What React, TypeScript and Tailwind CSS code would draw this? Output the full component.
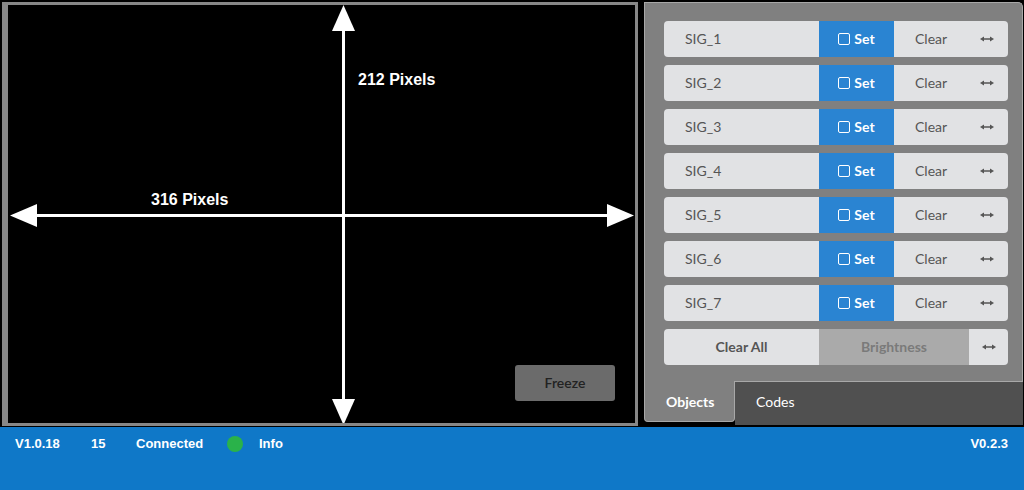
const signals = ['SIG_1', 'SIG_2', 'SIG_3', 'SIG_4', 'SIG_5', 'SIG_6', 'SIG_7'];

function SideArrow() {
  return (
    <svg width="14" height="8" viewBox="0 0 14 8" className="block">
      <line x1="3" y1="4" x2="11" y2="4" stroke="#555" strokeWidth="1.4" />
      <polygon points="0,4 4,1.5 4,6.5" fill="#555" />
      <polygon points="14,4 10,1.5 10,6.5" fill="#555" />
    </svg>
  );
}

function SigRow({ name }: { name: string }) {
  return (
    <div className="flex h-[36px] rounded-[4px] overflow-hidden bg-[#e1e2e4] text-[14px] leading-[34px]">
      <div className="w-[155px] flex items-center pl-[21px] text-[#555]">{name}</div>
      <div className="w-[75px] flex items-center justify-center gap-[4px] bg-[#2a84d2] text-white font-bold">
        <span className="w-[12px] h-[12px] rounded-[2px] border-[1.5px] border-white inline-block" />
        <span>Set</span>
      </div>
      <div className="flex-1 flex items-center pl-[21px] text-[#555]">Clear</div>
      <div className="w-[38px] flex items-center justify-center pr-[4px]">
        <SideArrow />
      </div>
    </div>
  );
}

export default function App() {
  return (
    <div className="w-[1024px] h-[490px] bg-black flex flex-col overflow-hidden" style={{ fontFamily: 'Lato, "Liberation Sans", sans-serif' }}>
      <div className="flex h-[427px]">
        {/* camera view */}
        <div className="ml-[2px] mt-[2px] w-[636px] h-[424px] border-l-[6px] border-t-[3px] border-r-[3px] border-b-[3px] border-[#878787] bg-black relative">
          <svg className="absolute left-0 top-0" width="627" height="418" viewBox="0 0 627 418">
            <line x1="335.5" y1="20" x2="335.5" y2="398" stroke="#fff" strokeWidth="3" />
            <line x1="24" y1="210.5" x2="602" y2="210.5" stroke="#fff" strokeWidth="3" />
            <polygon points="335.5,0 324,26 347,26" fill="#fff" />
            <polygon points="335.5,420 324,394 347,394" fill="#fff" />
            <polygon points="2,210.5 29,199 29,222" fill="#fff" />
            <polygon points="626,210.5 599,199 599,222" fill="#fff" />
          </svg>
          <div className="absolute left-[350px] top-[67px] text-white font-bold text-[16px] leading-none" style={{ fontFamily: '"Liberation Sans", Arial, sans-serif' }}>
            212 Pixels
          </div>
          <div className="absolute left-[143px] top-[187px] text-white font-bold text-[16px] leading-none" style={{ fontFamily: '"Liberation Sans", Arial, sans-serif' }}>
            316 Pixels
          </div>
          <button className="absolute left-[507px] top-[360px] w-[100px] h-[36px] rounded-[3px] bg-[#6b6b6b] text-[#222] text-[14px] font-semibold leading-[34px]">
            Freeze
          </button>
        </div>

        {/* control panel */}
        <div className="ml-[6px] mt-[2px] w-[379px] h-[423px] flex flex-col">
          <div className="h-[379px] bg-[#808080] border-l border-t border-r border-[#a8a8a8] rounded-tr-[5px] pl-[19px] pr-[14px] pt-[18px] flex flex-col gap-[8px]">
            {signals.map((s) => (
              <SigRow key={s} name={s} />
            ))}
            <div className="flex h-[36px] rounded-[4px] overflow-hidden bg-[#e1e2e4] text-[14px] font-bold leading-[34px]">
              <div className="w-[155px] flex items-center justify-center text-[#555]">Clear All</div>
              <div className="w-[150px] flex items-center justify-center bg-[#aaaaaa] text-[#7a7a7a]">Brightness</div>
              <div className="flex-1 flex items-center justify-center">
                <SideArrow />
              </div>
            </div>
          </div>
          <div className="flex h-[44px] text-[14px] text-white">
            <div className="w-[91px] h-[41px] bg-[#808080] border-l border-r border-b border-[#a8a8a8] rounded-b-[4px] flex items-center pl-[21px] font-bold">
              Objects
            </div>
            <div className="flex-1 bg-[#505050] border-t border-[#a8a8a8] flex items-center pl-[21px] pb-[4px]">
              Codes
            </div>
          </div>
        </div>
      </div>

      {/* status bar */}
      <div className="flex-1 bg-[#0f78c8] text-white font-bold text-[13px]" style={{ fontFamily: '"Liberation Sans", Arial, sans-serif' }}>
        <div className="h-[33px] flex items-center pl-[15px] pr-[16px]">
          <div className="w-[76px]">V1.0.18</div>
          <div className="w-[45px]">15</div>
          <div className="w-[91px]">Connected</div>
          <div className="w-[32px]">
            <div className="w-[16px] h-[16px] rounded-full bg-[#2ab24a]" />
          </div>
          <div>Info</div>
          <div className="ml-auto">V0.2.3</div>
        </div>
      </div>
    </div>
  );
}
